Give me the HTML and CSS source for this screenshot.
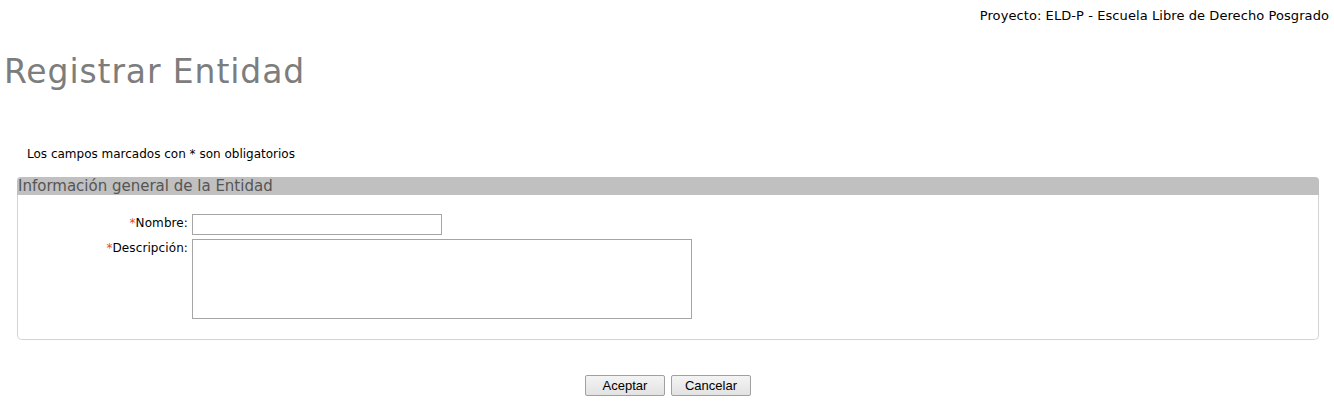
FILE: index.html
```html
<!DOCTYPE html>
<html lang="es">
<head>
<meta charset="utf-8">
<title>Registrar Entidad</title>
<link rel="stylesheet" href="styles.css">
</head>
<body>
<div class="topbar">Proyecto: ELD-P - Escuela Libre de Derecho Posgrado</div>
<h1 class="title">Registrar Entidad</h1>
<p class="note">Los campos marcados con * son obligatorios</p>
<section class="panel">
  <div class="panel-head">Información general de la Entidad</div>
  <div class="form">
    <label class="lbl" for="nombre"><span class="req">*</span>Nombre:</label>
    <input class="field" id="nombre" type="text">
    <label class="lbl" for="desc"><span class="req">*</span>Descripción:</label>
    <textarea class="area" id="desc"></textarea>
  </div>
</section>
<div class="actions">
  <button class="btn" type="button">Aceptar</button>
  <button class="btn" type="button">Cancelar</button>
</div>
</body>
</html>
```
FILE: styles.css
```css
html, body { margin: 0; padding: 0; background: #fff; }
body {
  font-family: "DejaVu Sans", Verdana, sans-serif;
  font-size: 12px;
  color: #000;
}
.topbar {
  text-align: right;
  padding: 8px 5px 0 0;
  height: 16px;
  line-height: 16px;
  font-size: 13px;
  letter-spacing: 0.08px;
}
.title {
  margin: 28px 0 0 4px;
  font-weight: normal;
  font-size: 33px;
  line-height: 40px;
  color: #7d7d7d;
  letter-spacing: 0.9px;
}
.note {
  margin: 54px 0 0 27px;
  line-height: 16px;
  font-size: 12px;
}
.panel {
  margin: 15px 15px 0 17px;
  border: 1px solid #d4d4d4;
  border-top: 0;
  border-radius: 5px;
  height: 163px;
  box-sizing: border-box;
}
.panel-head {
  background: #c0c0c0;
  height: 18px;
  line-height: 18px;
  padding-left: 1px;
  margin: 0 -1px;
  font-size: 15px;
  color: #555;
  border-radius: 4px 4px 0 0;
}
.form {
  display: grid;
  grid-template-columns: 170px auto;
  column-gap: 4px;
  row-gap: 4px;
  padding-top: 19px;
  justify-items: start;
}
.lbl {
  justify-self: end;
  font-size: 12px;
  line-height: 16px;
  padding-top: 1px;
  letter-spacing: 0.1px;
}
.req { color: #e34a1a; }
.field {
  width: 250px;
  height: 21px;
  box-sizing: border-box;
  border: 1px solid #a5a5a5;
  margin: 0;
  padding: 0 2px;
  font: inherit;
}
.area {
  width: 500px;
  height: 80px;
  box-sizing: border-box;
  border: 1px solid #a5a5a5;
  margin: 0;
  padding: 2px;
  resize: none;
  font: inherit;
}
.actions {
  display: flex;
  justify-content: center;
  gap: 6px;
  margin-top: 35px;
  padding-left: 2px;
}
.btn {
  width: 80px;
  height: 21px;
  margin: 0;
  padding: 0;
  font-family: "Liberation Sans", Arial, sans-serif;
  font-size: 13px;
  color: #000;
  border: 1px solid #a0a0a0;
  border-radius: 2px;
  background: linear-gradient(#f4f4f4, #e2e2e2);
}
```
